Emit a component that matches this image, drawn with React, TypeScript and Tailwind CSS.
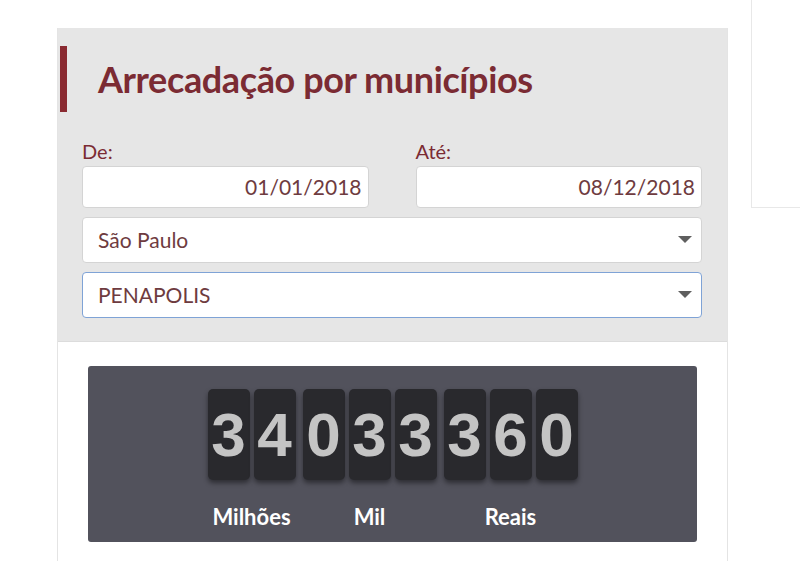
const groups = [
  { label: "Milhões", digits: ["3", "4"] },
  { label: "Mil", digits: ["0", "3", "3"] },
  { label: "Reais", digits: ["3", "6", "0"] },
];

function Caret() {
  return (
    <svg width="14" height="8" viewBox="0 0 14 8" className="shrink-0">
      <path d="M0 0 L14 0 L7 7 Z" fill="#5f5f5f" />
    </svg>
  );
}

function DateField({ label, value }: { label: string; value: string }) {
  return (
    <div className="flex flex-1 flex-col">
      <span className="mb-[3px] text-[20px] leading-[24px] text-[#7b2b33]">{label}</span>
      <div className="flex h-[42px] items-center justify-end rounded-[4px] border border-[#d4d4d4] bg-white px-[6px] text-[21px] text-[#6e3b40]">
        {value}
      </div>
    </div>
  );
}

function SelectField({ value, focused }: { value: string; focused?: boolean }) {
  return (
    <div
      className={`flex h-[46px] items-center justify-between rounded-[4px] border bg-white pl-[15px] pr-[9px] text-[21px] text-[#6e3b40] ${
        focused ? "border-[#7fa3d6]" : "border-[#d4d4d4]"
      }`}
    >
      <span>{value}</span>
      <Caret />
    </div>
  );
}

export default function App() {
  return (
    <div className="relative h-[561px] w-[800px] overflow-hidden bg-white font-['Lato',sans-serif]">
      <div className="absolute right-0 top-0 h-[208px] w-[49px] border-b border-l border-[#e8e8e8]" />
      <div className="ml-[57px] mt-[28px] w-[671px] border-x border-[#e4e4e4]">
        <div className="bg-[#e6e6e6] pb-[23px] pt-[18px]">
          <div className="flex items-center">
            <div className="ml-[2px] h-[66px] w-[7px] bg-[#8a2a31]" />
            <h1 className="ml-[31px] text-[36px] font-bold leading-[44px] tracking-[-0.4px] text-[#7b2b33]">
              Arrecadação por municípios
            </h1>
          </div>
          <div className="mt-[27px] flex flex-col gap-[9px] pl-[24px] pr-[25px]">
            <div className="flex gap-[47px]">
              <DateField label="De:" value="01/01/2018" />
              <DateField label="Até:" value="08/12/2018" />
            </div>
            <SelectField value="São Paulo" />
            <SelectField value="PENAPOLIS" focused />
          </div>
        </div>
        <div className="h-[250px] border-t border-[#dcdcdc] px-[30px] pt-[24px]">
          <div className="flex h-[176px] flex-col items-center rounded-[3px] bg-[#52525c] pt-[23px]">
            <div className="flex gap-[7px]">
              {groups.map((g) => (
                <div key={g.label} className="flex flex-col items-center">
                  <div className="flex gap-[4px]">
                    {g.digits.map((d, i) => (
                      <div
                        key={i}
                        className="flex h-[91px] w-[42px] items-center justify-center rounded-[5px] bg-[#29292d] font-['Liberation_Sans',sans-serif] text-[62px] font-bold text-[#c4c4c4] shadow-[0_3px_5px_rgba(0,0,0,0.45)]"
                      >
                        {d}
                      </div>
                    ))}
                  </div>
                  <span className="mt-[26px] text-[22px] font-bold leading-none text-white">{g.label}</span>
                </div>
              ))}
            </div>
          </div>
        </div>
      </div>
    </div>
  );
}
